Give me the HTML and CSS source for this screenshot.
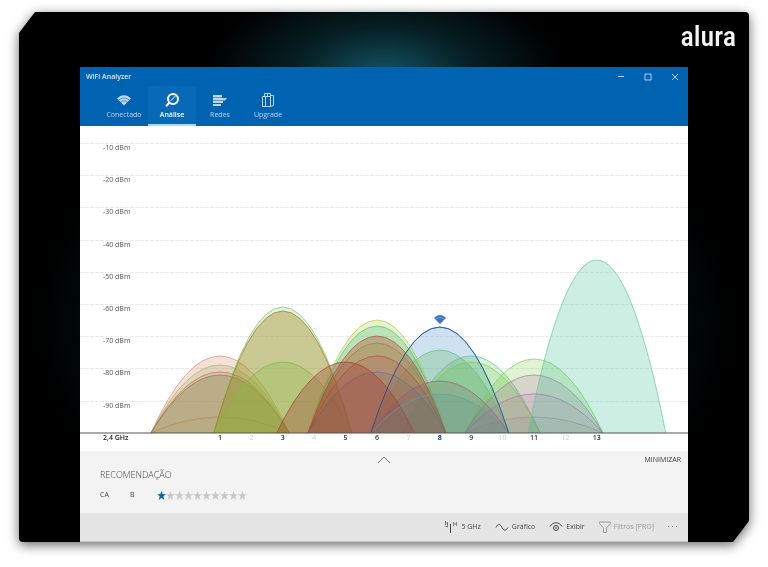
FILE: index.html
```
<!DOCTYPE html>
<html lang="pt-BR">
<head>
    <meta charset="UTF-8">
    <meta name="viewport" content="width=device-width, initial-scale=1.0">
    <title>WiFi Analyzer</title>
    <link rel="stylesheet" href="styles.css">
</head>
<body>
<div class="shadow">
    <div class="frame">
        <header class="brand">alura</header>
        <main class="app">
            <div class="titlebar">
                <span class="title">WiFi Analyzer</span>
                <button class="win-btn" aria-label="Minimizar janela"><svg width="8" height="8" viewBox="0 0 8 8"><path d="M1 3.500h6"/></svg></button>
                <button class="win-btn" aria-label="Maximizar"><svg width="8" height="8" viewBox="0 0 8 8"><path d="M1 1h6v6H1z"/></svg></button>
                <button class="win-btn" aria-label="Fechar"><svg width="8" height="8" viewBox="0 0 8 8"><path d="M1 1l6 6M7 1L1 7"/></svg></button>
            </div>
            <nav class="tabs">
                <a class="tab" href="#conectado">
                    <svg width="16" height="16" viewBox="0 0 16 16"><path class="solid" d="M1 6.500C5 2 11 2 15 6.500L8 13.500z"/><path class="gap" d="M2.500 8.300c3.500-3 7.500-3 11 0M4.500 10.200c2.200-1.800 4.800-1.800 7 0"/></svg>
                    Conectado
                </a>
                <a class="tab active" href="#analise">
                    <svg width="16" height="16" viewBox="0 0 16 16"><circle class="thick" cx="9" cy="7" r="5"/><path class="thick" d="M5.500 10.500L2 14.300"/><path d="M6.500 9l5-5"/></svg>
                    Análise
                </a>
                <a class="tab" href="#redes">
                    <svg width="16" height="16" viewBox="0 0 16 16"><path class="solid" d="M1 3h9v2.500H1zM1 6h14l-2 2.500H1zM1 9h10v2H1zM1 12h8v2H1z"/></svg>
                    Redes
                </a>
                <a class="tab" href="#upgrade">
                    <svg width="16" height="16" viewBox="0 0 16 16"><path d="M2.500 4.500h8v10h-8zM4.500 4.500v-3h6v3M10.500 3.500h3v10l-3 1M5.500 4.500v10M7.500 1.500v3"/></svg>
                    Upgrade
                </a>
            </nav>

            <svg class="chart" id="chart" viewBox="0 0 608 325" role="img" aria-label="Redes 2,4 GHz">
                <g id="grid"></g>
                <g id="curves"></g>
                <path class="marker" d="M354 192c4-4 8-4 12 0l-6 6z"/>
                <path class="marker-gap" d="M355.500 193.500c3-2.500 6-2.500 9 0"/>
                <path class="axis" d="M0 307h608"/>
                <text class="band" x="23" y="314">2,4 GHz</text>
                <g id="channels"></g>
            </svg>

            <section class="panel">
                <div class="panel-top">
                    <button class="toggle" aria-label="Recolher"><svg width="14" height="8" viewBox="0 0 14 8"><path d="M1 7l6-6 6 6"/></svg></button>
                    <button class="minimize">MINIMIZAR</button>
                </div>
                <h2>RECOMENDAÇÃO</h2>
                <div class="rating">
                    <span class="country">CA</span>
                    <span class="channel">B</span>
                    <span class="stars" id="stars"></span>
                </div>
            </section>

            <footer class="toolbar">
                <button class="tool">
                    <svg width="14" height="12" viewBox="0 0 14 12"><path d="M6.500 3v9"/><path class="thin" d="M3.500 1v5M1.500 0v4M9.500 1v4M12.500 1v4M11 2v2M1 1l3 2M1 5l3 1"/></svg>
                    5 GHz
                </button>
                <button class="tool">
                    <svg width="14" height="12" viewBox="0 0 14 12"><path d="M1 6.500c2-4 4-4 6 0s4 3 6 0"/></svg>
                    Gráfico
                </button>
                <button class="tool">
                    <svg width="14" height="12" viewBox="0 0 14 12"><path d="M1 5.500c3-5 9-5 12 0"/><circle cx="7" cy="7" r="2.500"/><path d="M6 7h2"/></svg>
                    Exibir
                </button>
                <button class="tool" disabled>
                    <svg width="12" height="12" viewBox="0 0 12 12"><path d="M.5 1h11v1.500L7.500 7v4.500h-3V7L.5 2.500z"/></svg>
                    Filtros [PRO]
                </button>
                <button class="tool more" aria-label="Mais"><svg width="10" height="2" viewBox="0 0 10 2"><path class="dots" d="M0 0h1v1H0zM4 0h1v1H4zM8 0h1v1H8z"/></svg></button>
            </footer>
        </main>
    </div>
</div>
<script>
    // channel, peak height, stroke, fill, fill opacity
    const networks = [
        [1, 77, '#e08a78', '#c86838', 0.2],
        [1, 68, '#a8b860', '#90a040', 0.2],
        [1, 61, '#d06070', '#b87058', 0.16],
        [1, 58, '#78803a', '#707838', 0.3],
        [1, 16, '#b08a50', '#b08a50', 0.05],
        [3, 126, '#70cc60', '#70c060', 0.2],
        [3, 122, '#a87028', '#a88c20', 0.4],
        [3, 71, '#70c040', '#80c040', 0.28],
        [8, 106, '#2060b0', '#1068b8', 0.2],
        [8, 83, '#60c080', '#50b050', 0.25],
        [9, 77, '#60c880', '#30c050', 0.2],
        [9, 71, '#90c050', '#70b820', 0.16],
        [11, 74, '#80c868', '#70c840', 0.22],
        [11, 58, '#a080a0', '#b868a8', 0.22],
        [11, 39, '#b868b0', '#b860b0', 0.15],
        [11, 16, '#a89080', '#808080', 0.08],
        [13, 173, '#68c8a0', '#28b888', 0.24],
        [6, 113, '#b0c840', '#b0cc30', 0.25],
        [6, 107, '#50c080', '#50c090', 0.3],
        [6, 97, '#b85040', '#a85838', 0.38],
        [6, 90, '#b87040', '#a88040', 0.2],
        [6, 77, '#b84848', '#b84850', 0.22],
        [6, 61, '#607098', '#705868', 0.15],
        [5, 71, '#b03838', '#a03830', 0.32],
        [8, 52, '#a85090', '#804868', 0.18],
        [8, 39, '#60a0a0', '#509890', 0.2],
        // outline of the connected network stays on top
        [8, 106, '#104c98', 'none', 0]
    ];
    const base = 307;
    const channelX = n => 140 + (n - 1) * 31.4;

    let grid = '';
    for (let i = 1; i <= 9; i++) {
        const y = Math.round(17 + (i - 1) * 32.2);
        grid += `<line class="grid-line" x1="0" x2="608" y1="${y}.5" y2="${y}.5"/>`;
        grid += `<text class="level" x="23" y="${y + 7}">-${i}0 dBm</text>`;
    }
    document.getElementById('grid').innerHTML = grid;

    document.getElementById('curves').innerHTML = networks.map(([ch, h, stroke, fill, opacity]) => {
        const x = channelX(ch);
        return `<path class="curve" d="M${x - 69} ${base}Q${x} ${base - 2 * h} ${x + 69} ${base}" stroke="${stroke}" fill="${fill}" fill-opacity="${opacity}"/>`;
    }).join('');

    const used = [1, 3, 5, 6, 8, 9, 11, 13];
    let channels = '';
    for (let n = 1; n <= 13; n++) {
        let cls = used.includes(n) ? 'ch used' : 'ch';
        if (n === 8) cls += ' current';
        channels += `<text class="${cls}" x="${channelX(n)}" y="314">${n}</text>`;
    }
    document.getElementById('channels').innerHTML = channels;

    const star = 'M4.500 0l1.200 3.200H9L6.300 5.300l1 3.700-2.800-2.200L1.700 9l1-3.700L0 3.200h3.300z';
    for (let i = 0; i < 10; i++) {
        document.getElementById('stars').innerHTML += `<svg class="star${i < 1 ? ' on' : ''}" width="9" height="9" viewBox="0 0 9 9"><path d="${star}"/></svg>`;
    }
</script>
</body>
</html>
```
FILE: styles.css
```
* { box-sizing: border-box; }
body { margin:0; background:#fff; font-family: "Open Sans", "Noto Sans", sans-serif; font-size:7px; line-height:10px; color:#444; }
button { border:0; padding:0; background:none; font:inherit; color:inherit; cursor:pointer; }
svg { display:block; fill:none; stroke:currentColor; }

.shadow { padding:12px 19px 24px; filter: drop-shadow(0 3px 6px rgba(0,0,0,0.6)); }
.frame {
    border-radius:4px;
    background:
        radial-gradient(ellipse 180px 90px at 50% 60px, #125260, rgba(12,60,70,0.5) 50%, transparent),
        radial-gradient(ellipse 350px 240px at 50% 310px, #04191d 60%, transparent),
        #000;
    clip-path: polygon(16px 0, 100% 0, 100% calc(100% - 21px), calc(100% - 16px) 100%, 0 100%, 0 21px);
}
.brand { height:55px; padding:9px 13px 0 0; text-align:right; font-family: "Roboto Condensed", Roboto, sans-serif; font-size:28px; line-height:32px; font-weight:500; color:#f4f4f4; }
.app { margin:0 61px; background:#fff; border-bottom:1px solid #b4ccd2; }

.titlebar { display:flex; align-items:center; height:19px; padding-left:6px; background:#0063b1; color:#dce8f4; }
.title { flex:1; font-weight:600; }
.win-btn { width:27px; height:19px; display:flex; align-items:center; justify-content:center; color:#b8cfe8; }
.tabs { display:flex; height:40px; padding-left:20px; background:#0063b1; }
.tab { width:48px; padding-top:6px; display:flex; flex-direction:column; align-items:center; gap:2px; color:#c0d4ea; text-decoration:none; border-bottom:2px solid transparent; }
.tab.active { background:#086ab7; color:#fff; border-color:#a0dcf4; font-weight:600; }
.solid { fill:currentColor; stroke:none; }
.gap { stroke:#0063b1; stroke-width:0.6; }
.thick { stroke-width:2; }
.thin { stroke-width:0.6; }

.chart { width:100%; height:auto; stroke:none; }
.grid-line { stroke:#ebebeb; stroke-dasharray:4 1; }
.level { fill:#555; font-size:7px; }
.curve { stroke-opacity:0.7; }
.axis { stroke:#555; }
.band { fill:#222; font-size:7px; font-weight:600; }
.ch { fill:#ccc; font-size:7px; text-anchor:middle; }
.ch.used { fill:#333; font-weight:600; }
.ch.current { fill:#123a6c; font-weight:bold; }
.marker { fill:#3a74bc; }
.marker-gap { stroke:#a8c4e4; stroke-width:0.6; }

.panel { height:62px; padding:3px 7px 0 20px; background:#f3f3f3; }
.panel-top { display:grid; grid-template-columns:1fr auto 1fr; align-items:center; height:12px; margin-left:-13px; }
.toggle { grid-column:2; color:#777; }
.minimize { grid-column:3; justify-self:end; color:#333; }
.panel h2 { margin:2px 0 0; font-size:9px; line-height:14px; font-weight:300; color:#444; }
.rating { display:flex; align-items:center; height:12px; margin-top:7px; }
.country { width:30px; }
.channel { width:27px; }
.stars { display:flex; }
.star { stroke:none; fill:#c8c8c8; }
.star.on { fill:#0063b1; }

.toolbar { display:flex; align-items:center; justify-content:flex-end; gap:14px; height:28px; padding-right:10px; background:#e5e5e5; }
.tool { display:flex; align-items:center; gap:3px; color:#444; }
.tool:disabled { color:#999; }
.dots { fill:#888; stroke:none; }
```
